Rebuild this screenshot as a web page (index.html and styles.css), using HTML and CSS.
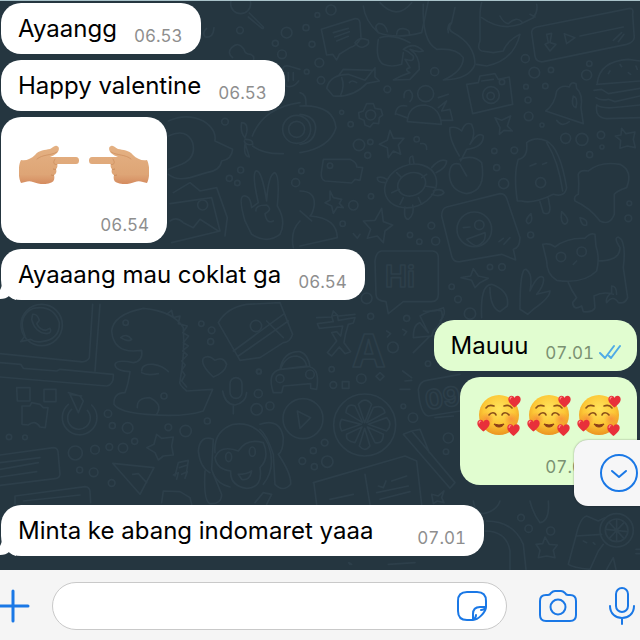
FILE: index.html
```html
<!DOCTYPE html>
<html lang="id">
<head>
<meta charset="utf-8">
<meta name="viewport" content="width=device-width, initial-scale=1">
<title>Chat</title>
<link rel="stylesheet" href="styles.css">
</head>
<body>

<!-- shapes used more than once -->
<svg class="defs" aria-hidden="true">
  <defs>
    <linearGradient id="skin" x1="0" y1="0" x2="0" y2="1">
      <stop offset="0" stop-color="#e4b183"/>
      <stop offset=".75" stop-color="#dea576"/>
      <stop offset="1" stop-color="#d58b5f"/>
    </linearGradient>
    <radialGradient id="face" cx=".5" cy=".35" r=".65">
      <stop offset="0" stop-color="#ffe45c"/>
      <stop offset=".6" stop-color="#fcc736"/>
      <stop offset="1" stop-color="#ec9420"/>
    </radialGradient>
    <radialGradient id="blush">
      <stop offset="0" stop-color="#f5743a" stop-opacity=".6"/>
      <stop offset="1" stop-color="#f5743a" stop-opacity="0"/>
    </radialGradient>
    <symbol id="heart" viewBox="0 0 12 12">
      <path d="M6 11.5C3.500 9.500.3 7 .3 3.900C.3 1.900 1.700.7 3.200.7C4.500.7 5.500 1.500 6 2.700C6.500 1.500 7.500.7 8.800.7C10.300.7 11.700 1.900 11.700 3.900C11.700 7 8.500 9.500 6 11.500Z" fill="#e8303a"/>
      <path d="M2 3.600C2 2.600 2.600 2 3.400 2" fill="none" stroke="#ff8585" stroke-width="1.200" stroke-linecap="round"/>
    </symbol>
    <symbol id="hand" viewBox="0 0 60 40">
      <path d="M2 15C7 16 12 14 16 10C20 5 26 5 31 4C34 3 35 0 38 1C41 2 40 6 38 8C36 10 33 11 31 12H57C59 12 60 13.500 60 15.500C60 18 59 19 57 19H38C39 21 38 23 37 24C38 27 37 29 35 30C36 34 35 37 31 38C26 40 19 39 14 37C10 35 6 37 2 38C-1 32-1 21 2 15Z" fill="url(#skin)"/>
      <path d="M38 19.500C34 20 34 17 36 14M18 14C24 9 31 11 38 7" fill="none" stroke="#c98a5a" stroke-width="1" stroke-linecap="round" opacity=".65"/>
      <path d="M37 24C36 25 35 24 34 24M35 30C34 31 33 30 32 30" fill="none" stroke="#c98a5a" stroke-width="1"/>
    </symbol>
    <symbol id="love" viewBox="0 0 44 44">
      <circle cx="22" cy="21" r="20" fill="url(#face)"/>
      <circle cx="10" cy="25" r="7" fill="url(#blush)"/>
      <circle cx="34" cy="25" r="7" fill="url(#blush)"/>
      <path d="M9 14C11 11 14 11 17 12M27 12C30 11 33 11 35 14M12 21C14 18 18 18 19 21M25 21C26 18 30 18 32 21" fill="none" stroke="#8a501a" stroke-width="1.600" stroke-linecap="round"/>
      <path d="M17 30C19 34 25 34 27 30Q22 32 17 30Z" fill="#8a3d18" stroke="#8a3d18" stroke-linejoin="round"/>
      <use href="#heart" x="31" y="1" width="13" height="13"/>
      <use href="#heart" x="0" y="25" width="13" height="13"/>
      <use href="#heart" x="30" y="29" width="13" height="14"/>
    </symbol>
  </defs>
</svg>

<main class="chat">

  <svg class="wallpaper" viewBox="0 0 640 570" preserveAspectRatio="xMinYMin slice" aria-hidden="true">
    <!-- top left -->
    <g transform="scale(.3333)">
      <circle cx="722" cy="8" r="30"/><path d="M748 36L790 78Q792 84 786 82L745 48"/>
      <path d="M620 82Q605 95 616 108Q640 112 642 80M698 170Q680 155 695 140Q715 120 732 145Q735 160 752 160Q770 170 755 185"/>
      <circle cx="720" cy="88" r="10"/><circle cx="826" cy="127" r="9"/><circle cx="846" cy="160" r="13"/><circle cx="860" cy="95" r="16"/>
      <path d="M848 205Q850 192 866 195L900 205M852 215L858 255Q880 262 896 240M865 215V240M880 215V238"/>
      <path d="M505 360Q560 335 610 360Q650 385 645 420L698 445Q695 475 665 480Q660 510 620 515L570 530Q530 540 505 520M505 405Q560 380 578 425Q590 470 545 490L505 505"/>
      <path d="M725 365Q745 365 740 395L735 410Q720 395 725 365ZM735 415Q760 415 758 430Q740 435 733 420L748 468Q730 465 735 430M758 435Q790 460 850 458M757 405Q790 320 900 305"/>
      <circle cx="675" cy="362" r="10"/><circle cx="890" cy="385" r="42"/><circle cx="890" cy="385" r="24"/>
      <circle cx="722" cy="507" r="9"/><circle cx="688" cy="532" r="9"/><circle cx="712" cy="546" r="8"/><circle cx="887" cy="545" r="12"/>
      <path d="M510 608L635 590L660 690L515 725M520 575L570 545L600 570L650 560L682 650L675 705M510 660Q530 645 550 665L580 680L600 655L655 690"/><circle cx="608" cy="612" r="15"/>
      <path d="M735 660Q715 590 730 585Q750 580 755 620L775 605Q755 520 768 510Q785 505 800 600Q805 520 825 515Q840 525 832 615Q860 660 840 700Q800 730 755 700ZM768 630Q765 612 800 612Q820 625 795 638Q800 670 820 660M880 740Q870 690 900 660"/>
    </g>
    <!-- top right -->
    <g transform="translate(300) scale(.3333)">
      <circle cx="93" cy="27" r="15"/><circle cx="52" cy="42" r="7"/><circle cx="18" cy="80" r="9"/><circle cx="36" cy="130" r="9"/><circle cx="58" cy="185" r="13"/><circle cx="20" cy="212" r="7"/><circle cx="63" cy="238" r="11"/>
      <path d="M64 85L165 53Q178 52 180 65L183 110Q170 135 150 140L118 160L110 177L98 160L80 162ZM100 95L145 82M104 108L148 92M110 120L145 106"/>
      <path d="M165 125Q180 105 205 118Q210 132 190 138Q178 142 165 125"/>
      <path d="M190 15Q195 60 235 95Q290 115 365 95Q375 50 385 0M240 5Q290 60 335 5M235 95Q220 75 235 68Q255 65 262 92M290 100Q290 82 310 83Q330 85 328 100"/>
      <path d="M235 115Q225 175 250 190Q275 200 305 190L310 155M240 110Q280 98 330 125M370 10Q365 120 410 145Q470 140 490 170Q490 210 430 237Q510 235 525 190Q525 130 460 95Q440 85 455 65L465 20M445 95Q440 70 455 65"/>
      <path d="M310 145Q340 120 370 150Q350 155 330 145Q360 165 358 205L330 235L280 237Q300 225 330 215Q310 205 330 200L315 175Q345 185 340 165Q325 150 310 145Z"/><circle cx="404" cy="212" r="12"/>
      <path d="M540 50Q540 20 545 5M545 50Q600 90 660 70L700 50Q715 30 710 10M540 50L540 120Q530 145 545 150L580 155L610 150Q620 120 660 100Q640 180 560 195L530 190M600 45Q610 65 625 68Q650 45 665 62M690 40L705 48"/>
      <path d="M710 78L990 22Q1002 22 998 40L1003 110Q1000 125 980 130L730 182Q708 185 705 165L695 95Q695 82 710 78ZM740 100L755 97L750 125L768 130L750 150L735 130L745 125ZM793 98L825 110L800 128ZM840 105L970 78M940 118L965 95M955 122L972 100"/>
      <path d="M80 262Q90 220 145 220L195 238L225 200V228L238 240L200 247Q160 290 100 285ZM115 225L130 205L220 208M125 230Q135 255 122 282M148 245Q155 235 170 245"/>
      <circle cx="262" cy="265" r="10"/><circle cx="125" cy="334" r="6"/><circle cx="152" cy="370" r="8"/>
      <path d="M200 308L220 308L225 322L243 325L248 342L238 350L236 368L220 366L210 378L195 372L192 358L178 352L176 335L190 330Z"/><circle cx="212" cy="342" r="15"/>
      <circle cx="377" cy="278" r="24"/><path d="M322 362Q325 312 375 312Q420 320 424 370ZM286 340Q290 308 320 315M312 290Q310 265 330 268Q345 285 330 302M415 290L445 280M415 320L440 300L425 330L450 325L458 358H425M288 338L320 350"/>
      <path d="M500 250L535 245L540 225L585 218L595 235L628 228L638 310L518 338ZM545 240L580 235"/><circle cx="573" cy="282" r="25"/><circle cx="572" cy="285" r="11"/><circle cx="606" cy="243" r="8"/>
      <path d="M737 330Q765 310 770 270Q785 250 808 258Q812 240 828 248L830 262Q850 280 843 320L850 368ZM770 358Q785 380 808 362M820 285Q835 290 828 320Q812 315 820 285Z"/>
      <circle cx="676" cy="173" r="12"/><circle cx="703" cy="215" r="16"/><circle cx="753" cy="207" r="8"/><circle cx="736" cy="255" r="8"/><circle cx="678" cy="257" r="7"/><circle cx="684" cy="297" r="9"/><circle cx="686" cy="346" r="13"/><circle cx="860" cy="222" r="15"/><circle cx="868" cy="188" r="8"/><circle cx="726" cy="372" r="6"/>
      <path d="M892 245Q900 180 985 175L1020 180M890 250L1020 240M882 268L905 265L925 278L1020 262M888 290Q900 300 925 295L945 302L1020 285M890 312Q905 325 960 318L1020 312M890 315Q885 350 920 353L1020 350M930 210L925 218M960 190L965 197M985 215L992 220M1008 195L1012 205"/>
      <path d="M0 315Q100 310 108 380Q90 440 0 455M0 340Q45 345 47 380Q45 425 0 430M0 275Q20 280 18 310"/>
      <path d="M585 350L605 358L632 345L622 375L637 390L612 388L598 400L600 380Z"/>
      <path d="M478 465Q445 410 450 380Q470 375 485 390Q495 360 515 370Q530 400 510 430Q535 390 550 405Q550 440 500 445L482 480M480 475Q520 460 545 485Q560 570 500 578Q450 570 448 520Q450 480 480 490L500 525"/>
      <path d="M270 388L280 412L312 412L295 432L302 460L280 450L265 470L262 440L238 430L262 418Z"/>
      <circle cx="177" cy="432" r="17"/><circle cx="211" cy="423" r="8"/><circle cx="203" cy="463" r="9"/><circle cx="350" cy="415" r="8"/><path d="M362 428Q382 425 380 445"/>
      <path d="M70 475L150 475Q172 485 170 498L188 500L180 538L165 535L155 546L75 540Q62 535 64 515Z"/><circle cx="90" cy="494" r="8"/><circle cx="4" cy="510" r="8"/>
      <ellipse cx="332" cy="555" rx="80" ry="63" transform="rotate(-22 332 555)"/><ellipse cx="335" cy="550" rx="43" ry="34" transform="rotate(-22 335 550)"/>
      <path d="M330 490Q325 465 338 465L342 488M395 500Q420 470 440 480Q440 500 408 515M255 545Q230 545 232 530Q245 525 260 535M400 570Q425 560 432 575Q420 590 395 580M315 618Q310 655 325 655Q345 640 338 612M290 515L305 530M275 575L298 565M355 590L365 610M380 520L365 530M375 555L405 560M310 590L300 610"/>
      <path d="M652 600Q640 520 655 475Q685 470 680 425Q705 405 740 420Q780 440 800 560Q795 590 760 580Q700 610 665 600ZM740 425Q775 480 788 570M720 602L730 635Q750 645 750 620L745 592M690 495L708 488M728 490L740 485"/><circle cx="722" cy="545" r="15"/>
      <circle cx="583" cy="450" r="8"/><circle cx="643" cy="448" r="10"/><circle cx="590" cy="500" r="9"/><circle cx="611" cy="548" r="15"/><circle cx="797" cy="412" r="15"/><circle cx="846" cy="415" r="18"/><circle cx="903" cy="402" r="11"/><circle cx="869" cy="461" r="9"/><circle cx="906" cy="438" r="6"/>
      <path d="M965 382L978 398L1005 393L1000 415L1006 440L982 435L960 442L962 418L946 405L963 402Z"/>
      <path d="M835 520Q840 505 865 510Q900 480 960 490Q1000 510 980 560Q950 570 943 580V640Q930 675 900 660Q870 620 825 600Q820 585 835 580Q838 550 835 520Z"/>
      <path d="M90 570L100 590L125 595L118 607L130 620L112 618L100 637L95 615L75 605L90 597Z"/><circle cx="160" cy="613" r="14"/><circle cx="213" cy="586" r="8"/><circle cx="128" cy="668" r="8"/><path d="M160 698L172 712L180 700"/>
      <path d="M245 622L250 662L278 672L255 690L250 725L232 705L202 712L212 685L190 660L225 658Z"/>
      <path d="M0 570Q45 570 43 610Q40 635 30 645Q110 650 112 710L0 735M0 630L35 660"/>
      <path d="M440 618L600 578Q615 578 620 592L660 710Q660 740 640 745L647 777L605 760L480 782Q460 785 455 765L425 645Q425 622 440 618Z"/><circle cx="523" cy="685" r="52"/><path d="M490 680L510 678M500 715L555 695Q560 725 530 735Q515 732 500 715ZM597 722L610 712M612 730L630 710"/><circle cx="538" cy="672" r="14"/>
      <circle cx="394" cy="674" r="10"/><circle cx="407" cy="720" r="12"/><circle cx="330" cy="702" r="8"/><circle cx="358" cy="722" r="8"/><circle cx="692" cy="702" r="9"/><circle cx="985" cy="652" r="10"/><circle cx="988" cy="607" r="7"/>
      <path d="M693 638Q670 660 685 668Q700 665 693 638ZM785 632Q780 665 795 670Q815 660 785 632ZM840 650Q865 655 860 672Q845 678 840 650Z"/>
      <path d="M728 730Q750 725 765 738Q800 710 855 712Q870 695 885 700L888 735Q900 770 890 810Q850 850 770 838Q740 820 740 780ZM895 780Q960 780 960 740Q940 710 955 708Q980 720 970 800L983 890Q975 910 955 905Q940 880 920 905Q915 890 935 875L935 855Q950 855 950 880M805 845Q815 870 830 890L818 905Q820 930 845 915L850 932Q880 935 885 920L882 885Q910 870 940 880M820 790L830 780"/><circle cx="783" cy="768" r="14"/><circle cx="845" cy="752" r="14"/>
      <path d="M245 750H398Q415 752 415 770V880Q415 902 395 902H310L265 938L258 902Q228 900 228 880L225 780Q228 752 245 750Z"/>
      <text x="255" y="858" font-size="88">Hi</text>
      <path d="M520 803L535 825L565 832L540 845L525 860L515 838L483 830L512 825ZM545 950Q540 850 575 850Q630 870 622 915L600 932Q570 920 570 860M660 925Q660 800 678 805Q700 820 690 870Q715 815 730 830Q735 850 710 880L750 870Q750 890 700 925L683 940Z"/>
      <circle cx="570" cy="798" r="8"/><circle cx="606" cy="798" r="10"/><circle cx="455" cy="857" r="8"/><circle cx="474" cy="895" r="10"/><circle cx="200" cy="892" r="16"/><circle cx="510" cy="938" r="17"/><path d="M370 930Q400 935 430 920Q440 940 420 960M50 950L95 948L100 930L115 945L165 940"/>
    </g>
    <!-- left, under the fourth bubble -->
    <g transform="translate(0 300) scale(.3333)">
      <circle cx="125" cy="72" r="62"/><path d="M75 105Q50 45 100 22Q160 10 178 65Q180 115 125 122Q105 125 92 115L62 122Z"/><path d="M98 40Q112 38 118 58L110 68Q120 88 138 88L150 82Q158 95 140 98Q105 95 95 55Z"/>
      <path d="M278 10L268 170Q260 185 240 182L0 158M300 10L285 210M0 185L62 190L70 202L170 210L180 205L340 220Q342 250 320 255L0 228"/>
      <path d="M425 148Q430 180 400 185Q350 175 345 190Q345 210 390 212Q385 250 375 275Q340 275 342 310Q360 335 440 340Q550 350 610 330L638 265L560 270Q535 250 540 240Q555 160 550 80Q520 30 430 22Q340 40 335 90Q340 150 400 150ZM425 210Q425 188 460 190Q490 195 505 212M425 215Q440 225 475 218M412 320Q410 290 450 290Q490 310 470 340M500 40L515 28L520 50L540 45L535 68L562 75L548 95L566 105L550 125L565 135L548 150L562 162L545 180L556 192L545 208L555 222L545 240L560 258M362 110Q380 95 395 115Q385 125 362 110Z"/><circle cx="377" cy="65" r="8"/><circle cx="492" cy="285" r="9"/>
      <path d="M655 65Q680 20 740 10L840 5L878 100Q870 125 850 125L780 170L720 178ZM700 150L850 40M715 165L865 60M800 60L850 110"/><circle cx="768" cy="75" r="17"/>
      <circle cx="604" cy="68" r="8"/><circle cx="635" cy="88" r="10"/><circle cx="632" cy="122" r="9"/>
      <path d="M640 228Q600 190 610 172Q625 160 645 178Q670 165 680 190Q675 215 640 228Z"/>
      <rect x="690" y="230" width="36" height="62" rx="18"/><path d="M668 270Q675 310 705 312Q738 305 740 275M700 312V338"/>
      <path d="M50 260H90V300H52ZM132 265H168V302H132ZM66 315H90L95 305L120 310L130 320H144L136 380L120 378Q105 355 85 372L66 370ZM205 275L240 285L250 300L235 335M235 335L210 280L245 285"/><path d="M205 310A52 52 0 1 0 275 312M215 325A34 34 0 1 0 262 328"/>
      <circle cx="324" cy="338" r="11"/><circle cx="337" cy="374" r="9"/><circle cx="383" cy="381" r="16"/><circle cx="505" cy="379" r="10"/><circle cx="557" cy="390" r="17"/><circle cx="622" cy="360" r="9"/><circle cx="770" cy="325" r="17"/><circle cx="775" cy="278" r="12"/><circle cx="810" cy="315" r="12"/><circle cx="226" cy="456" r="21"/><circle cx="285" cy="446" r="13"/><circle cx="328" cy="438" r="10"/><circle cx="369" cy="441" r="14"/><circle cx="404" cy="421" r="9"/><circle cx="239" cy="507" r="9"/><circle cx="281" cy="514" r="13"/><circle cx="335" cy="546" r="10"/><circle cx="27" cy="408" r="8"/><circle cx="75" cy="409" r="7"/><circle cx="776" cy="211" r="7"/>
      <path d="M470 400L485 412L520 408L515 435L520 462L490 465L475 477L465 455L440 440L462 430ZM338 487L462 500L420 580ZM398 520L415 518L440 545M525 525L535 485L565 478L558 525M538 500L562 492M520 522L535 515L530 535M545 520L562 512L555 532"/>
      <path d="M0 462L160 440Q172 440 174 452L180 520Q178 532 165 533L0 553M0 485L120 470M0 505L115 485M0 528L110 512M45 610V585L255 557Q268 558 270 570L272 605M70 600L240 582M485 605L490 570L540 572L570 590L575 610M765 605L790 575L815 580L800 610"/>
      <path d="M645 455Q640 390 700 370Q770 360 805 430Q830 500 790 550M645 470Q660 430 715 450Q740 410 790 425Q810 470 780 500Q790 560 740 562Q690 555 692 510Q650 505 645 470ZM640 520Q655 550 690 558"/><ellipse cx="686" cy="468" rx="9" ry="14"/><ellipse cx="757" cy="452" rx="9" ry="14"/><path d="M715 520Q740 520 755 510Q750 540 725 535ZM640 415Q600 400 595 450Q600 500 630 515M615 510Q610 600 630 608Q665 610 665 580Q640 520 635 505L640 415M780 370Q840 350 850 410Q850 450 835 460M835 460Q875 520 872 550Q850 575 825 550L820 460Q800 400 780 385"/>
    </g>
    <!-- middle -->
    <g transform="translate(220 300) scale(.3333)">
      <path d="M292 68L340 62L335 45L352 42L355 58L405 50L400 66L385 70Q375 100 372 125L392 152L375 158L358 138L335 165L322 155L350 120L335 95L350 92L362 105L368 75L298 82Z"/>
      <text x="396" y="198" font-size="135">A</text>
      <path d="M160 275Q140 215 180 205Q190 150 240 152Q265 160 270 198Q300 205 290 265L272 262V248L190 255L185 275ZM182 205Q195 165 230 165Q255 170 260 195ZM182 205L265 197"/><circle cx="180" cy="233" r="12"/><circle cx="270" cy="220" r="13"/>
      <circle cx="249" cy="353" r="60"/><path d="M232 330L272 350L240 382Z"/>
      <circle cx="434" cy="372" r="93"/>
      <path d="M434 365L415 310Q435 285 455 310ZM440 365L460 320Q490 310 495 335ZM445 370L500 350Q520 370 500 390ZM442 378L490 400Q490 430 465 425ZM434 382L450 435Q435 455 418 435ZM426 378L405 425Q375 420 380 400ZM424 370L365 390Q355 370 365 355ZM428 365L378 335Q380 305 405 315Z"/>
      <path d="M600 45Q640 20 665 30Q675 60 640 90L635 105L580 110Q580 70 600 65L625 95ZM630 105L580 155M548 210L575 230M555 240L575 238M540 265H570M595 265Q600 240 620 238L720 220M595 265Q600 340 625 345L720 330M645 350L700 345"/>
      <text x="615" y="320" font-size="80" transform="rotate(-8 660 290)">09</text>
      <path d="M550 400L575 390L705 545L690 562ZM575 390L600 385L628 455M280 545L555 465L590 480L605 610M290 610L282 548M435 520L450 610M330 595L400 580M475 555L490 560L498 540M515 540L560 525M470 575L565 555M480 595L570 572M635 580L655 585L672 570L665 590L672 605L652 600L640 608Z"/>
      <circle cx="335" cy="205" r="8"/><circle cx="340" cy="252" r="10"/><rect x="367" y="242" width="20" height="20"/><circle cx="424" cy="233" r="14"/><path d="M480 215L492 226L480 238L468 226ZM500 90L512 98L502 108M548 85L560 92L552 102"/><circle cx="519" cy="139" r="16"/><circle cx="560" cy="52" r="9"/><circle cx="452" cy="46" r="9"/><circle cx="579" cy="350" r="14"/><circle cx="550" cy="316" r="7"/><circle cx="314" cy="425" r="10"/><circle cx="280" cy="449" r="9"/><circle cx="247" cy="480" r="10"/><circle cx="322" cy="482" r="17"/><circle cx="283" cy="497" r="9"/><circle cx="685" cy="411" r="15"/><circle cx="678" cy="452" r="8"/><circle cx="117" cy="212" r="7"/><circle cx="624" cy="188" r="8"/>
    </g>
    <!-- bottom right -->
    <g transform="translate(320 500) scale(.3333)">
      <path d="M500 60Q580 60 610 130L618 205M495 90Q560 90 570 150L570 205M460 0Q465 35 490 38Q530 30 540 0M630 0Q640 40 660 65Q690 60 685 0M675 108L688 130L712 132L700 148L705 170L680 165L655 170L660 148L648 130L668 128Z"/>
      <circle cx="603" cy="50" r="10"/><circle cx="626" cy="83" r="11"/><circle cx="692" cy="90" r="12"/>
      <path d="M768 105Q780 50 800 45L835 60L855 50M768 105L845 100M768 105L745 190Q760 200 810 205L835 150L850 130M790 120L800 125M820 125L825 130M860 205L880 170L888 205M948 145H960M948 158H960"/>
      <circle cx="890" cy="88" r="50"/><circle cx="890" cy="88" r="34"/><path d="M890 55V120M858 85L922 92M868 65L912 112M912 65L868 112M95 190Q80 180 90 190M205 190L285 185"/>
    </g>
  </svg>

  <div class="msg"><p>Ayaangg</p><time>06.53</time></div>
  <div class="msg"><p>Happy valentine</p><time>06.53</time></div>
  <div class="msg emoji">
    <div class="hands">
      <svg viewBox="0 0 60 40" role="img" aria-label="pointing right"><use href="#hand"/></svg>
      <svg class="flip" viewBox="0 0 60 40" role="img" aria-label="pointing left"><use href="#hand"/></svg>
    </div>
    <time>06.54</time>
  </div>
  <div class="msg last">
    <svg class="tail" viewBox="0 0 16 18" aria-hidden="true"><path d="M2 0C2 4 1 6 0 8V17C4 17 7 16 9 14C11 16 13 17 16 18V0Z"/></svg>
    <p>Ayaaang mau coklat ga</p><time>06.54</time>
  </div>

  <div class="msg out">
    <p>Mauuu</p>
    <time>07.01</time>
    <svg class="ticks" viewBox="0 0 22 16" role="img" aria-label="read"><path d="M1 9L6 14L15 2M10 12L12 14L21 2"/></svg>
  </div>
  <div class="msg out emoji last">
    <div class="faces">
      <svg viewBox="0 0 44 44" role="img" aria-label="smiling face with hearts"><use href="#love"/></svg>
      <svg viewBox="0 0 44 44" role="img" aria-label="smiling face with hearts"><use href="#love"/></svg>
      <svg viewBox="0 0 44 44" role="img" aria-label="smiling face with hearts"><use href="#love"/></svg>
    </div>
    <div class="meta">
      <time>07.01</time>
      <svg class="ticks" viewBox="0 0 22 16" aria-hidden="true"><path d="M1 9L6 14L15 2M10 12L12 14L21 2"/></svg>
    </div>
  </div>

  <div class="msg wide">
    <svg class="tail" viewBox="0 0 16 18" aria-hidden="true"><path d="M2 0C2 4 1 6 0 8V17C4 17 7 16 9 14C11 16 13 17 16 18V0Z"/></svg>
    <p>Minta ke abang indomaret yaaa</p><time>07.01</time>
  </div>

  <button class="scroll-down" type="button" aria-label="Scroll to latest">
    <svg viewBox="0 0 40 40"><circle cx="20" cy="20" r="18"/><path d="M13 18L20 24L27 18"/></svg>
  </button>
</main>

<form class="bar">
  <button class="plus" type="button" aria-label="Attach">
    <svg viewBox="0 0 30 34"><path d="M0 17H28M13 2V32"/></svg>
  </button>
  <div class="field">
    <input type="text" aria-label="Message">
    <button class="sticker" type="button" aria-label="Stickers">
      <svg viewBox="0 0 32 32"><path d="M11 2H21Q30 2 30 11V17C30 22 22 30 17 30H11Q2 30 2 21V11Q2 2 11 2ZM17 30V24Q17 17 24 17H30M17 30Q20 28 20 25M30 17Q28 20 25 20"/></svg>
    </button>
  </div>
  <button class="camera" type="button" aria-label="Camera">
    <svg viewBox="0 0 38 34"><path d="M7 6H9Q11 6 12 4Q14 2 16 2H22Q24 2 26 4Q27 6 29 6H31Q37 6 37 12V26Q37 32 31 32H7Q1 32 1 26V12Q1 6 7 6Z"/><circle cx="19" cy="18" r="7.500"/></svg>
  </button>
  <button class="mic" type="button" aria-label="Record">
    <svg viewBox="0 0 26 40"><rect x="7" y="2" width="12" height="24" rx="6"/><path d="M1 20C1 36 25 36 25 20M13 32V38"/></svg>
  </button>
</form>

</body>
</html>
```
FILE: styles.css
```css
* {
    box-sizing: border-box;
}

body {
    margin: 0;
    min-height: 100vh;
    display: flex;
    flex-direction: column;
    font-family: Inter, "Liberation Sans", sans-serif;
    background: #f5f5f5;
    color: #000;
}

button {
    border: 0;
    padding: 0;
    background: none;
    cursor: pointer;
}

svg {
    display: block;
}

.defs {
    position: absolute;
    width: 0;
    height: 0;
}

/* conversation */
.chat {
    position: relative;
    flex: 1;
    display: flex;
    flex-direction: column;
    align-items: flex-start;
    gap: 6px;
    padding: 2px 3px 13px 1px;
    border-top: 1px solid #a9c2c9;
    background: #253640;
    overflow: hidden;
}

.wallpaper {
    position: absolute;
    top: 0;
    left: 0;
    width: 100%;
    height: 100%;
    fill: none;
    stroke: #2d3f4a;
    stroke-width: 5;
    stroke-linecap: round;
    stroke-linejoin: round;
}

.wallpaper text {
    font-family: Inter, sans-serif;
    font-weight: 700;
}

.msg {
    position: relative;
    display: flex;
    gap: 17px;
    min-height: 51px;
    padding: 0 18px 0 17px;
    border-radius: 20px;
    background: #fff;
}

.msg p {
    margin: 0;
    padding-top: 1px;
    font-size: 24px;
    line-height: 50px;
}

.msg time {
    align-self: flex-end;
    margin-left: auto;
    padding-bottom: 8px;
    font-size: 17px;
    line-height: 20px;
    font-variant-numeric: tabular-nums;
    color: #8e8e8e;
}

.msg.last {
    margin-bottom: 14px;
}

.wide {
    min-width: 483px;
}

.tail {
    position: absolute;
    left: -1px;
    bottom: 0;
    width: 16px;
    height: 18px;
    fill: #fff;
}

.out {
    align-self: flex-end;
    padding-right: 16px;
    background: #e1fdd0;
}

.out time {
    color: #7b9172;
}

.ticks {
    align-self: flex-end;
    width: 22px;
    height: 16px;
    margin: 0 0 11px -12px;
    fill: none;
    stroke: #4fabe6;
    stroke-width: 2;
    stroke-linecap: round;
    stroke-linejoin: round;
}

/* bubbles that hold only emoji */
.emoji {
    flex-direction: column;
    justify-content: space-between;
    min-height: 126px;
    padding-left: 18px;
}

.hands {
    display: flex;
    gap: 10px;
    padding-top: 28px;
}

.hands svg {
    width: 60px;
    height: 40px;
}

.flip {
    transform: scaleX(-1);
}

.faces {
    display: flex;
    gap: 6px;
    padding-top: 17px;
}

.faces svg {
    width: 44px;
    height: 44px;
}

.meta {
    display: flex;
    justify-content: flex-end;
    gap: 17px;
}

.out.emoji {
    min-height: 108px;
    padding-left: 17px;
}

.meta time {
    margin-left: 0;
}

.scroll-down {
    position: absolute;
    right: 0;
    bottom: 64px;
    width: 66px;
    height: 66px;
    padding-left: 25px;
    border-radius: 14px 0 0 14px;
    background: #f6f6f7;
    box-shadow: 0 0 2px rgba(0, 0, 0, .4);
}

.scroll-down svg {
    width: 40px;
    height: 40px;
}

/* message bar */
.bar {
    display: flex;
    align-items: center;
    height: 70px;
    padding: 2px 5px 0 0;
    background: #f5f5f5;
}

.bar svg,
.scroll-down svg {
    fill: none;
    stroke: #1a78e6;
    stroke-width: 2;
    stroke-linecap: round;
    stroke-linejoin: round;
}

.bar .plus svg {
    width: 30px;
    height: 34px;
    stroke-width: 3;
}

.plus {
    width: 52px;
}

.field {
    flex: 1;
    display: flex;
    align-items: center;
    height: 48px;
    padding: 0 18px 0 22px;
    border: 1px solid #c9c9c9;
    border-radius: 24px;
    background: #fff;
}

.field input {
    flex: 1;
    min-width: 0;
    border: 0;
    outline: 0;
    background: none;
    font: inherit;
    font-size: 24px;
}

.sticker svg {
    width: 32px;
    height: 32px;
}

.camera {
    margin: 0 32px;
}

.camera svg {
    width: 38px;
    height: 34px;
}

.mic svg {
    width: 26px;
    height: 40px;
}
```
